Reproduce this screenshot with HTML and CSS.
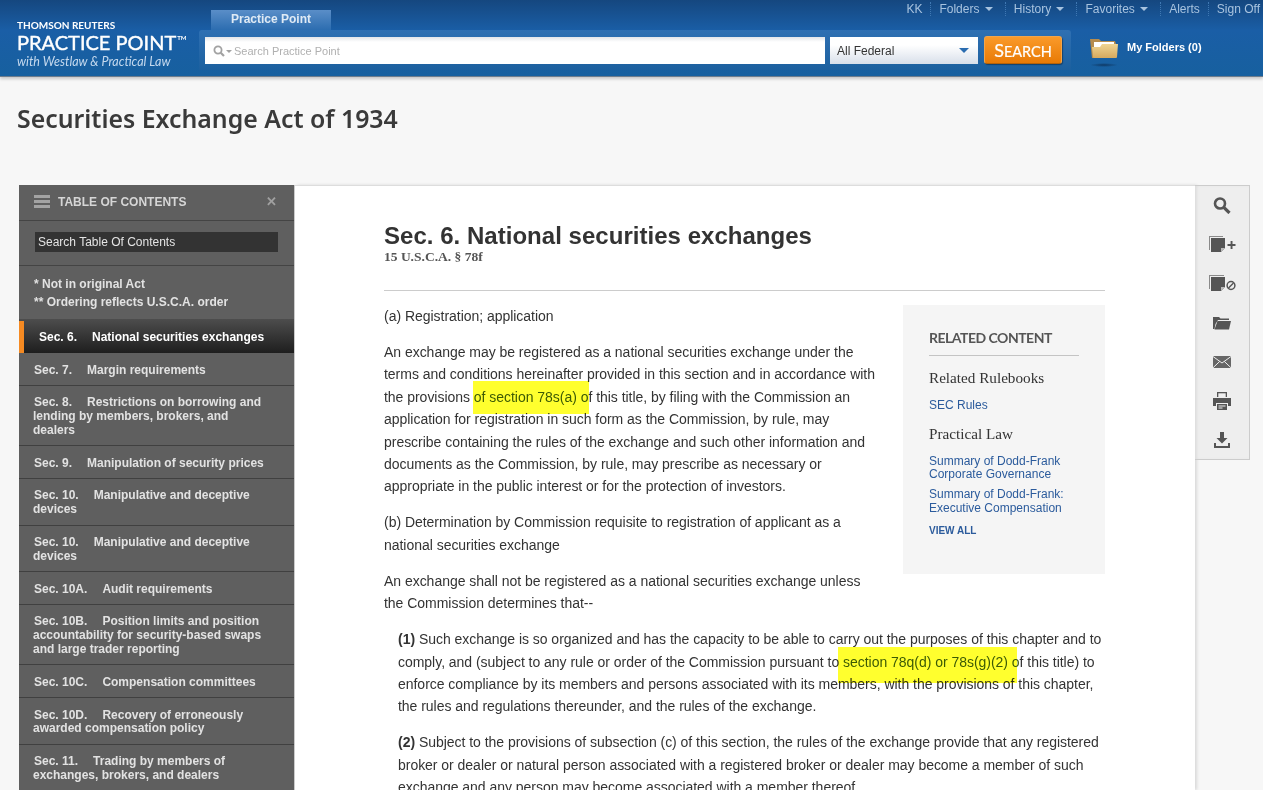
FILE: index.html
```html
<!DOCTYPE html>
<html lang="en">
<head>
<meta charset="utf-8">
<title>Securities Exchange Act of 1934</title>
<link rel="stylesheet" href="styles.css">
</head>
<body>
<header class="head">
  <div class="brand">
    <div class="brand-tr">THOMSON REUTERS</div>
    <div class="brand-pp">PRACTICE POINT<sup class="tm">TM</sup></div>
    <div class="brand-with">with Westlaw &amp; Practical Law</div>
  </div>
  <nav class="topnav">
    <a class="nav-item">KK</a>
    <a class="nav-item">Folders <i class="caret"></i></a>
    <a class="nav-item">History <i class="caret"></i></a>
    <a class="nav-item">Favorites <i class="caret"></i></a>
    <a class="nav-item">Alerts</a>
    <a class="nav-item">Sign Off</a>
  </nav>
  <div class="searcharea">
    <div class="tab">Practice Point</div>
    <div class="searchbar">
      <div class="query">
        <svg class="q-icon" width="12" height="12" viewBox="0 0 12 12"><circle cx="5" cy="5" r="3.6" fill="none" stroke="#a2a2a2" stroke-width="1.8"/><path d="M7.7 7.7 11 11" stroke="#a2a2a2" stroke-width="2.2"/></svg>
        <i class="q-caret"></i>
        <span class="q-text">Search Practice Point</span>
      </div>
      <div class="juris"><span>All Federal</span><i class="juris-caret"></i></div>
      <div class="go">SEARCH</div>
    </div>
  </div>
  <div class="folders">
    <div class="folder-icon">
      <svg width="30" height="32" viewBox="0 0 30 32">
        <defs>
          <linearGradient id="fg" x1="0" y1="0" x2="0" y2="1"><stop offset="0" stop-color="#f0d592"/><stop offset="1" stop-color="#d6a95f"/></linearGradient>
          <radialGradient id="fs"><stop offset="0" stop-color="#0d2f55" stop-opacity=".8"/><stop offset="1" stop-color="#0d2f55" stop-opacity="0"/></radialGradient>
        </defs>
        <ellipse cx="14" cy="28" rx="14" ry="2" fill="url(#fs)"/>
        <path d="M0 2h9l2 2h14l1 3v14H2z" fill="#b68c4e"/>
        <path d="M4 5h20v6H4z" fill="#fff"/>
        <path d="M2 10h8l2-3h16l-1 13q0 1-1 1H4q-1 0-1-1z" fill="url(#fg)"/>
      </svg>
    </div>
    <span class="folder-label">My Folders (0)</span>
  </div>
</header>

<main class="page">
  <h1 class="doc-title">Securities Exchange Act of 1934</h1>
  <div class="layout">
    <aside class="toc">
      <div class="toc-head">
        <span class="burger"><i></i><i></i><i></i></span>
        <span class="toc-label">TABLE OF CONTENTS</span>
        <span class="toc-close">✕</span>
      </div>
      <div class="toc-search"><div class="toc-input">Search Table Of Contents</div></div>
      <div class="toc-notes">
        <div>* Not in original Act</div>
        <div>** Ordering reflects U.S.C.A. order</div>
      </div>
      <div class="toc-active"><span class="num">Sec. 6.</span>National securities exchanges</div>
      <div class="toc-item"><span class="num">Sec. 7.</span>Margin requirements</div>
      <div class="toc-item"><span class="num">Sec. 8.</span>Restrictions on borrowing and lending by members, brokers, and dealers</div>
      <div class="toc-item"><span class="num">Sec. 9.</span>Manipulation of security prices</div>
      <div class="toc-item"><span class="num">Sec. 10.</span>Manipulative and deceptive devices</div>
      <div class="toc-item"><span class="num">Sec. 10.</span>Manipulative and deceptive devices</div>
      <div class="toc-item"><span class="num">Sec. 10A.</span>Audit requirements</div>
      <div class="toc-item"><span class="num">Sec. 10B.</span>Position limits and position accountability for security-based swaps and large trader reporting</div>
      <div class="toc-item"><span class="num">Sec. 10C.</span>Compensation committees</div>
      <div class="toc-item"><span class="num">Sec. 10D.</span>Recovery of erroneously awarded compensation policy</div>
      <div class="toc-item"><span class="num">Sec. 11.</span>Trading by members of exchanges, brokers, and dealers</div>
    </aside>

    <article class="doc">
      <h2 class="doc-head">Sec. 6. National securities exchanges</h2>
      <div class="doc-cite">15 U.S.C.A. § 78f</div>
      <hr class="doc-rule">
      <section class="related">
        <h3 class="rel-title">RELATED CONTENT</h3>
        <h4 class="rel-sub">Related Rulebooks</h4>
        <a class="rel-link">SEC Rules</a>
        <h4 class="rel-sub rel-sub-2">Practical Law</h4>
        <a class="rel-link">Summary of Dodd-Frank Corporate Governance</a>
        <a class="rel-link rel-link-2">Summary of Dodd-Frank: Executive Compensation</a>
        <a class="rel-all">VIEW ALL</a>
      </section>
      <p>(a) Registration; application</p>
      <p>An exchange may be registered as a national securities exchange under the terms and conditions hereinafter provided in this section and in accordance with the provisions <span class="hl hl-a">of section 78s(a) o</span>f this title, by filing with the Commission an application for registration in such form as the Commission, by rule, may prescribe containing the rules of the exchange and such other information and documents as the Commission, by rule, may prescribe as necessary or appropriate in the public interest or for the protection of investors.</p>
      <p>(b) Determination by Commission requisite to registration of applicant as a national securities exchange</p>
      <p>An exchange shall not be registered as a national securities exchange unless the Commission determines that--</p>
      <p class="sub"><b>(1)</b> Such exchange is so organized and has the capacity to be able to carry out the purposes of this chapter and to comply, and (subject to any rule or order of the Commission pursuant to <span class="hl hl-b">section 78q(d) or 78s(g)(2) o</span>f this title) to enforce compliance by its members and persons associated with its members, with the provisions of this chapter, the rules and regulations thereunder, and the rules of the exchange.</p>
      <p class="sub"><b>(2)</b> Subject to the provisions of subsection (c) of this section, the rules of the exchange provide that any registered broker or dealer or natural person associated with a registered broker or dealer may become a member of such exchange and any person may become associated with a member thereof.</p>
    </article>

    <div class="rail">
      <svg class="rail-icon" width="18" height="17" viewBox="0 0 18 17"><circle cx="7" cy="6.500" r="5" fill="none" stroke="#555" stroke-width="2.600"/><path d="M10.800 10.300 16.500 16" stroke="#555" stroke-width="3.200"/></svg>
      <svg class="rail-icon" width="27" height="17" viewBox="0 0 27 17"><path d="M0 0h14v1H1v13H0z" fill="#8a8a8a"/><path d="M2 2h14v10l-4 4H2z" fill="#555"/><path d="M12 16v-4h4z" fill="#bbb"/><path d="M18.500 8h8v1.900h-8zM21.600 5h1.900v8h-1.900z" fill="#555"/></svg>
      <svg class="rail-icon" width="27" height="17" viewBox="0 0 27 17"><path d="M0 0h15v1H1v13H0z" fill="#8a8a8a"/><path d="M2 2h14v10l-4 4H2z" fill="#555"/><path d="M12 16v-4h4z" fill="#bbb"/><circle cx="22" cy="10.500" r="3.900" fill="none" stroke="#555" stroke-width="1.500"/><path d="M19.500 13l5-5" stroke="#555" stroke-width="1.500"/></svg>
      <svg class="rail-icon" width="18" height="14" viewBox="0 0 18 14"><path d="M0 1h6l1.500 1.500H16V4H5L2.500 8 1.500 13H0z" fill="#555"/><path d="M4.500 5H18l-2 8.500H1.500z" fill="#555"/></svg>
      <svg class="rail-icon" width="18" height="12" viewBox="0 0 18 12"><path d="M0 0h18v12H0z" fill="#666"/><path d="M0 .5 9 7 18 .5M0 11.800 6.800 5.300M18 11.800 11.200 5.300" fill="none" stroke="#eee" stroke-width="1"/></svg>
      <svg class="rail-icon" width="18" height="18" viewBox="0 0 18 18"><path d="M4 0h10v5H4z" fill="#555"/><path d="M5.300 1.300h7.400V5H5.300z" fill="#eee"/><path d="M0 6h18v8h-3v-3H3v3H0z" fill="#555"/><path d="M4 12h10v6H4z" fill="#555"/><path d="M5.500 13.500h7v1h-7zM5.500 15.500h4v1h-4z" fill="#eee"/></svg>
      <svg class="rail-icon" width="16" height="16" viewBox="0 0 16 16"><path d="M6 0h4v6h3.500L8 11.500 2.500 6H6z" fill="#555"/><path d="M0 11h2v3h12v-3h2v5H0z" fill="#555"/></svg>
    </div>
  </div>
</main>
</body>
</html>
```
FILE: styles.css
```css
* { box-sizing: border-box; }
html, body { margin: 0; height: 790px; overflow: hidden; }
body { background: #f7f7f7; font-family: "Liberation Sans", Arial, sans-serif; color: #333; }

.head {
  display: grid;
  grid-template-columns: 199px 872px 1fr;
  height: 77px;
  background: linear-gradient(#15477f 0, #1a5ea6 40%, #17609f 100%);
  border-bottom: 1px solid #6d7d8d;
  box-shadow: 0 2px 3px rgba(0,0,0,.2);
}
.brand { grid-row: 1; grid-column: 1; padding: 19px 0 0 17px; color: #fff; font-family: Lato, sans-serif; }
.brand-tr { font-size: 10px; font-weight: 700; line-height: 12px; }
.brand-pp { font-size: 20px; font-weight: 400; line-height: 23px; -webkit-text-stroke: .4px #fff; white-space: nowrap; }
.tm { font-size: 6px; font-weight: 700; vertical-align: 10px; line-height: 0; -webkit-text-stroke: 0; margin-left: 1px; }
.brand-with { font-size: 12.500px; font-style: italic; line-height: 15px; color: #c5d9ee; white-space: nowrap; }

.topnav { grid-row: 1; grid-column: 1 / -1; justify-self: end; display: flex; height: 17px; padding-right: 3px; align-items: center; font-size: 12px; color: #a8c3df; }
.nav-item { padding: 0 8px; border-left: 1px dotted #3f78b3; line-height: 14px; white-space: nowrap; }
.nav-item:first-child { border-left: 0; }
.nav-item:last-child { padding-right: 0; }
.caret { display: inline-block; width: 0; height: 0; margin: 0 4px 2px 2px; border: 4px solid transparent; border-top-color: #a8c3df; border-bottom: 0; }

.searcharea { grid-row: 1; grid-column: 2; padding-top: 10px; }
.tab { margin-left: 12px; width: 120px; height: 20px; background: linear-gradient(#5a8ec8, #2c6db0); color: #dfeaf5; font-size: 12px; font-weight: 700; line-height: 19px; text-align: center; }
.searchbar { display: flex; height: 40px; padding: 6px 9px 0 6px; background: linear-gradient(#2f70b3, #1c609f); border-radius: 3px 3px 0 0; align-items: flex-start; }
.query { display: flex; align-items: center; width: 620px; height: 27px; margin-top: 1px; padding-left: 8px; background: linear-gradient(#e4e6e9 0, #fff 5px, #fff 100%); }
.q-icon { flex: none; }
.q-caret { width: 0; height: 0; margin: 1px 2px 0 1px; border: 3px solid transparent; border-top-color: #a2a2a2; border-bottom: 0; }
.q-text { font-size: 11px; color: #b0b0b0; }
.juris { display: flex; align-items: center; justify-content: space-between; width: 148px; height: 27px; margin: 1px 0 0 5px; padding: 0 9px 0 7px; background: linear-gradient(#fff 30%, #d8dfea); font-size: 12px; color: #333; }
.juris-caret { width: 0; height: 0; border: 5px solid transparent; border-top: 5px solid #2a6cb0; border-bottom: 0; }
.go { width: 78px; height: 28px; margin-left: 6px; background: linear-gradient(#fa9a2a, #e87a05); border: 1px solid #f2a54a; border-bottom-color: #b76208; border-radius: 3px; box-shadow: 1px 1px 1px rgba(0,0,0,.35); color: #fff; font-family: Lato, sans-serif; font-size: 14.500px; -webkit-text-stroke: .2px #fff; text-align: center; line-height: 26px; }
.go::first-letter { font-size: 18px; }

.folders { grid-row: 1; grid-column: 3; display: flex; align-items: flex-start; padding: 37px 0 0 19px; }
.folder-icon { width: 30px; height: 32px; flex: none; }
.folder-label { margin: 4px 0 0 7px; font-size: 11px; font-weight: 700; color: #fff; white-space: nowrap; }

.doc-title { margin: 0; height: 108px; padding: 23px 0 0 17px; font-family: "Noto Sans", sans-serif; font-size: 24.850px; font-weight: 600; line-height: 36px; color: #3a3a3a; }

.layout { display: flex; align-items: flex-start; margin-left: 19px; }

.toc { flex: none; width: 276px; height: 605px; overflow: hidden; background: #5f5f5f; color: #e2e2e2; font-size: 12px; font-weight: 700; border-right: 1px solid #ccc; }
.toc-head { display: flex; align-items: center; height: 36px; padding: 0 17px 2px 15px; border-bottom: 1px solid #444; }
.burger { display: flex; flex-direction: column; gap: 2px; width: 16px; margin-right: 8px; }
.burger i { display: block; height: 3px; background: #a3a3a3; }
.toc-label { flex: 1; color: #d6d6d6; }
.toc-close { color: #a0a0a0; font-size: 13px; }
.toc-search { height: 45px; padding: 11px 16px 0; border-bottom: 1px solid #444; }
.toc-input { width: 243px; height: 20px; padding-left: 3px; background: #333; color: #e4e4e4; font-size: 12px; font-weight: 400; line-height: 20px; }
.toc-notes { height: 53px; padding: 9px 15px 0; line-height: 18px; }
.toc-active { height: 34px; padding-left: 20px; background: linear-gradient(#f58a22, #f58a22) 0 2px / 5px 100% no-repeat, linear-gradient(#4d4d4d, #1e1e1e); color: #fff; line-height: 36px; white-space: nowrap; }
.toc-item { padding: 10.500px 25px 7.500px 14px; border-bottom: 1px solid #404040; line-height: 13.800px; text-indent: 1px; }
.num { margin-right: 15px; }

.doc { flex: none; width: 900px; height: 605px; overflow: hidden; padding: 0 90px 0 89px; background: #fff; border-top: 1px solid #ddd; box-shadow: 2px 0 3px rgba(0,0,0,.12); font-size: 14px; letter-spacing: -.03px; line-height: 22.400px; color: #333; }
.doc-head { margin: 36px 0 0; font-size: 24px; font-weight: 700; letter-spacing: .03px; line-height: 27px; color: #333; }
.doc-cite { font-family: "Liberation Serif", serif; font-size: 13.500px; font-weight: 700; line-height: 16px; letter-spacing: 0; color: #555; }
.doc-rule { height: 1px; margin: 25px 0 14px; border: 0; background: #ccc; }
.doc p { margin: 0 0 13.600px; }
.doc p.sub { margin-left: 14px; }
.hl { position: relative; color: #3c5a14; }
.hl::after { content: ""; position: absolute; background: #ffff2e; mix-blend-mode: multiply; }
.hl-a::after { left: -1px; right: -1px; top: -8px; bottom: -9px; }
.hl-b::after { left: -5px; right: 3px; top: -7px; bottom: -13px; }

.related { float: right; width: 202px; height: 269px; margin-left: 20px; padding: 24px 26px 0; background: #f5f5f5; letter-spacing: 0; }
.rel-title { margin: 0 0 12px; padding-bottom: 8px; border-bottom: 1px solid #c4c4c4; font-family: Lato, sans-serif; font-size: 14px; font-weight: 700; letter-spacing: -.5px; line-height: 18px; color: #555; white-space: nowrap; }
.rel-sub { margin: 0 0 11px; font-family: "Liberation Serif", serif; font-size: 15.200px; font-weight: 400; line-height: 20px; color: #333; }
.rel-sub-2 { margin-top: 11px; margin-bottom: 11px; }
.rel-link { display: block; font-size: 12px; line-height: 13.500px; color: #2b5b9c; }
.rel-link-2 { margin-top: 6.500px; }
.rel-all { display: block; margin-top: 8.500px; font-size: 10px; font-weight: 700; line-height: 13px; color: #2b5b9c; }

.rail { flex: none; display: grid; grid-auto-rows: 39px; justify-items: center; align-items: center; width: 55px; height: 275px; background: #eee; border: 1px solid #ccc; border-left: 0; box-shadow: inset 3px 0 3px -1px #ddd; }
.rail-icon { display: block; }
```
